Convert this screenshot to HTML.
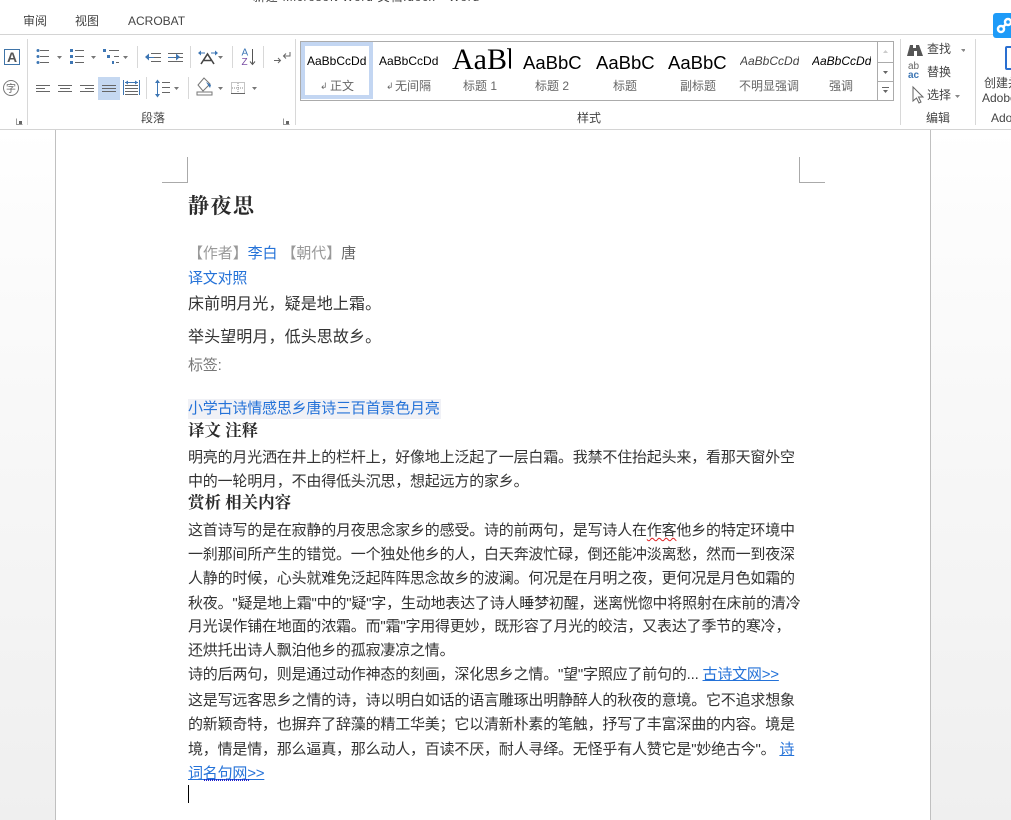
<!DOCTYPE html>
<html lang="zh"><head><meta charset="utf-8"><title>静夜思</title>
<style>
html,body{margin:0;padding:0}
body{width:1011px;height:820px;overflow:hidden;position:relative;background:#fff;font-family:"Liberation Sans","WenQuanYi Zen Hei","Noto Sans CJK SC",sans-serif}
.a{position:absolute;white-space:nowrap}
.sep{position:absolute;width:1px;background:#d8d8d8}
.t{position:absolute;white-space:nowrap;font-size:12px;line-height:14px;color:#444}
.l{position:absolute;left:188px;white-space:nowrap;font-size:15px;line-height:20px;height:20px;color:#333;letter-spacing:-.2px}
.b{color:#2472d8}
.g{color:#999}
.h{font-weight:bold;font-family:"Noto Serif CJK SC",serif;color:#2a2a2a}
.pv{position:absolute;white-space:nowrap;color:#000;overflow:hidden}
.lb{position:absolute;white-space:nowrap;font-size:12px;line-height:14px;color:#666;top:79px}
u.r{text-decoration:underline wavy #e02020 1px;text-underline-offset:2px}
</style></head><body>
<div class="a" style="left:0;top:130px;width:1011px;height:690px;background:linear-gradient(#fff 0,#fdfdfd 60px,#f8f8f8 280px,#efefef 690px)"></div>
<div class="a" style="left:55px;top:130px;width:874px;height:690px;background:#fff;border-left:1px solid #c0c0c0;border-right:1px solid #c0c0c0;box-sizing:content-box"></div>
<div class="a" style="left:0;top:129px;width:1011px;height:1px;background:#d4d4d4"></div>
<div class="a" style="left:0;top:34px;width:1011px;height:1px;background:#d4d4d4"></div>

<div class="t" style="left:253px;top:-10px;color:#444;letter-spacing:.75px">新建 Microsoft Word 文档.docx - Word</div>
<div class="t" style="left:23px;top:14px">审阅</div>
<div class="t" style="left:75px;top:14px">视图</div>
<div class="t" style="left:128px;top:14px">ACROBAT</div>

<div class="sep" style="left:27px;top:39px;height:86px"></div>
<div class="sep" style="left:295px;top:39px;height:86px"></div>
<div class="sep" style="left:900px;top:39px;height:86px"></div>
<div class="sep" style="left:975px;top:39px;height:86px"></div>
<div class="a" style="left:98px;top:77px;width:22px;height:23px;background:#c5d8f1"></div>

<svg class="a" style="left:0;top:0" width="300" height="130" fill="none" stroke-width="1">
<g stroke="#d8d8d8"><path d="M137.500 46v22M190.500 46v22M232.500 46v22M263.500 46v22M146.500 77v22M188.500 77v22"/></g>
<rect x="4.500" y="49.500" width="15" height="15" stroke="#3f74a8"/>
<text x="12" y="62" font-size="14" font-weight="bold" fill="#555" text-anchor="middle" font-family="Liberation Sans">A</text>
<circle cx="11" cy="88" r="7.500" stroke="#777"/>
<text x="11" y="92" font-size="10" fill="#666" text-anchor="middle" font-family="WenQuanYi Zen Hei">字</text>
<g stroke="#666"><path d="M40 50.500h9M40 56.500h9M40 62.500h9M75 50.500h9M75 56.500h9M75 62.500h9M109 50.500h10M114 56.500h5M116 62.500h3"/>
<path d="M151 53.500h10M153 57.500h8M151 61.500h10M168 53.500h15M174 57.500h9M168 61.500h15"/>
<path d="M36 85.500h14M36 88.500h9M36 91.500h14M58 85.500h14M60 88.500h10M58 91.500h14M80 85.500h14M85 88.500h9M80 91.500h14M102 85.500h14M102 88.500h14M102 91.500h14"/>
<path d="M125 85.500h13M125 88.500h13M125 91.500h13M125 94.500h13"/>
<path d="M162 82.500h8M162 87.500h8M162 92.500h8"/></g>
<g fill="#3d76b4"><circle cx="38" cy="50.500" r="1.500"/><circle cx="38" cy="56.500" r="1.500"/><circle cx="38" cy="62.500" r="1.500"/>
<rect x="70" y="49" width="3" height="3"/><rect x="70" y="55" width="3" height="3"/><rect x="70" y="61" width="3" height="3"/>
<rect x="103" y="49" width="3" height="3"/><rect x="107" y="55" width="3" height="3"/><rect x="112" y="61" width="2" height="3"/>
<path d="M145 57l4-3.500v7z"/><path d="M172 57l-4-3.500v7z" transform="translate(8 0)"/></g>
<path d="M147 57.500h7M168 57.500h6" stroke="#3d76b4"/>
<path d="M123.500 80v15M139.500 80v15M125 82.500h13" stroke="#3d76b4"/>
<path d="M125 82.500l3-2v4zM138 82.500l-3-2v4z" fill="#3d76b4"/>
<path d="M157.500 81v15" stroke="#3d76b4"/><path d="M155 83l2.500-3.500 2.500 3.500zM155 94l2.500 3.500 2.500-3.500z" fill="#3d76b4"/>
<path d="M201 64l6.500-10 6.500 10M204 60.500h7" stroke="#444" stroke-width="1.600"/>
<path d="M200 53h5M211 53h5" stroke="#3d76b4"/><path d="M198 53l3-2.500v5zM218 53l-3-2.500v5z" fill="#3d76b4"/>
<text x="241.500" y="55.500" font-size="10" fill="#3d76b4" font-family="Liberation Sans">A</text>
<text x="241.500" y="65" font-size="10" fill="#7a4ea3" font-family="Liberation Sans">Z</text>
<path d="M252.500 49v15M250 61.500l2.500 3 2.500-3" stroke="#555"/>
<path d="M290 52v4h-6M286 53.500l-2.500 2.500 2.500 2.500M274 60.500h6M278 58l2.500 2.500-2.500 2.500" stroke="#666"/>
<path d="M204 78l-6 7 5 6 7-7zM197 92h15v3h-15z" stroke="#777"/><path d="M206 82l5 3-1 3z" fill="#3d76b4"/>
<path d="M231.500 82.500h13v11h-13zM238 83v10M232 88h12" stroke="#888" stroke-dasharray="1 1"/><path d="M231 93.500h14" stroke="#666"/>
<g fill="#777"><path d="M57 56h5l-2.500 3zM91 56h5l-2.500 3zM123 56h5l-2.500 3zM218 56h5l-2.500 3zM174 87h5l-2.500 3zM218 87h5l-2.500 3zM252 87h5l-2.500 3z"/></g>
<g stroke="#999"><path d="M16.500 118.500v6h6M283.500 118.500v6h6"/></g><path d="M19 121h3v3h-3zM286 121h3v3h-3z" fill="#666"/>
</svg>

<div class="t" style="left:141px;top:111px">段落</div>
<div class="t" style="left:577px;top:111px">样式</div>
<div class="t" style="left:926px;top:111px">编辑</div>
<div class="t" style="left:991px;top:111px">Ado</div>

<div class="a" style="left:300px;top:41px;width:592px;height:58px;border:1px solid #ababab;background:#fff"></div>
<div class="a" style="left:301px;top:42px;height:49px;border:4px solid #c3d6f2;width:64px"></div>
<div class="a" style="left:877px;top:42px;width:1px;height:58px;background:#ababab"></div>
<div class="a" style="left:878px;top:62px;width:15px;height:1px;background:#ababab"></div>
<div class="a" style="left:878px;top:81px;width:15px;height:1px;background:#ababab"></div>
<svg class="a" style="left:878px;top:42px" width="15" height="58"><path d="M5 11h5l-2.500-3z" fill="#ccc"/><path d="M5 29h5l-2.500 3z" fill="#666"/><path d="M5 48h5l-2.500 3z" fill="#666"/><path d="M4 45.500h7" stroke="#666"/></svg>

<div class="pv" style="left:307px;top:54px;font-size:12px;line-height:14px">AaBbCcDd</div>
<div class="pv" style="left:379px;top:54px;font-size:12px;line-height:14px">AaBbCcDd</div>
<div class="pv" style="left:452px;top:43px;width:59px;font-family:'Liberation Serif',serif;font-size:30px;line-height:34px">AaBbC</div>
<div class="pv" style="left:523px;top:52px;font-size:18.500px;line-height:22px">AaBbC</div>
<div class="pv" style="left:596px;top:52px;font-size:18.500px;line-height:22px">AaBbC</div>
<div class="pv" style="left:668px;top:52px;font-size:18.500px;line-height:22px">AaBbC</div>
<div class="pv" style="left:740px;top:54px;font-size:12px;line-height:14px;font-style:italic;color:#444">AaBbCcDd</div>
<div class="pv" style="left:812px;top:54px;font-size:12px;line-height:14px;font-style:italic">AaBbCcDd</div>
<div class="lb" style="left:320px;font-size:9px">↲</div><div class="lb" style="left:330px">正文</div>
<div class="lb" style="left:386px;font-size:9px">↲</div><div class="lb" style="left:395px">无间隔</div>
<div class="lb" style="left:463px">标题 1</div>
<div class="lb" style="left:535px">标题 2</div>
<div class="lb" style="left:613px">标题</div>
<div class="lb" style="left:680px">副标题</div>
<div class="lb" style="left:739px">不明显强调</div>
<div class="lb" style="left:829px">强调</div>

<svg class="a" style="left:905px;top:42px" width="60" height="62" fill="none">
<path d="M5 3h3v3h3V3h3l4 11h-6V9h-3v5H2z" fill="#555"/>
<text x="3" y="27" font-size="10" fill="#666" font-family="Liberation Sans">ab</text>
<text x="3" y="36" font-size="10" fill="#3d76b4" font-family="Liberation Sans" font-weight="bold">ac</text>
<path d="M8 45v14l3.500-3 2.500 5 2-1-2.500-5h4.500z" stroke="#666" fill="#fff"/>
<path d="M56 7h5l-2.500 3zM50 53h5l-2.500 3z" fill="#888"/>
</svg>
<div class="t" style="left:927px;top:42px">查找</div>
<div class="t" style="left:927px;top:65px">替换</div>
<div class="t" style="left:927px;top:88px">选择</div>
<div class="t" style="left:984px;top:76px">创建并</div>
<div class="t" style="left:982px;top:91px">Adobe</div>
<div class="a" style="left:1005px;top:46px;width:14px;height:20px;border:2px solid #2a6fd0;border-radius:2px"></div>
<div class="a" style="left:993px;top:13px;width:30px;height:25px;background:#1e9bf8;border-radius:3px"></div>
<svg class="a" style="left:993px;top:13px" width="18" height="25" fill="none" stroke="#fff" stroke-width="2.500"><circle cx="8" cy="16" r="3"/><circle cx="15" cy="9" r="3"/><path d="M10 14l3-3"/></svg>

<svg class="a" style="left:0;top:0" width="1011" height="820" fill="none"><path d="M187.500 157v25.500H162M799.500 157v25.500H825" stroke="#aaa"/></svg>

<div class="l h" style="top:193px;font-size:21px;line-height:24px;height:24px;letter-spacing:1.500px">静夜思</div>
<div class="l" style="top:244px;letter-spacing:-.1px"><span class="g">【作者】</span><span class="b">李白</span> <span class="g">【朝代】</span><span style="color:#666">唐</span></div>
<div class="l b" style="top:269px">译文对照</div>
<div class="l" style="top:295px;font-size:16px;letter-spacing:.1px">床前明月光，疑是地上霜。</div>
<div class="l" style="top:328px;font-size:16px;letter-spacing:.1px">举头望明月，低头思故乡。</div>
<div class="l" style="top:356px;color:#777">标签:</div>
<div class="l b" style="top:399px;background:#f0f1f6;padding-right:1px">小学古诗情感思乡唐诗三百首景色月亮</div>
<div class="l h" style="top:419px;font-size:16.500px;letter-spacing:0">译文 注释</div>
<div class="l" style="top:448px">明亮的月光洒在井上的栏杆上，好像地上泛起了一层白霜。我禁不住抬起头来，看那天窗外空</div>
<div class="l" style="top:472px">中的一轮明月，不由得低头沉思，想起远方的家乡。</div>
<div class="l h" style="top:491px;font-size:16.500px;letter-spacing:0">赏析 相关内容</div>
<div class="l" style="top:521px">这首诗写的是在寂静的月夜思念家乡的感受。诗的前两句，是写诗人在<u class="r" style="text-decoration-line:underline">作客</u>他乡的特定环境中</div>
<div class="l" style="top:545px">一刹那间所产生的错觉。一个独处他乡的人，白天奔波忙碌，倒还能冲淡离愁，然而一到夜深</div>
<div class="l" style="top:569px">人静的时候，心头就难免泛起阵阵思念故乡的波澜。何况是在月明之夜，更何况是月色如霜的</div>
<div class="l" style="top:594px">秋夜。"疑是地上霜"中的"疑"字，生动地表达了诗人睡梦初醒，迷离恍惚中将照射在床前的清冷</div>
<div class="l" style="top:617px">月光误作铺在地面的浓霜。而"霜"字用得更妙，既形容了月光的皎洁，又表达了季节的寒冷，</div>
<div class="l" style="top:641px">还烘托出诗人飘泊他乡的孤寂凄凉之情。</div>
<div class="l" style="top:665px">诗的后两句，则是通过动作神态的刻画，深化思乡之情。"望"字照应了前句的... <span class="b" style="text-decoration:underline">古诗文网&gt;&gt;</span></div>
<div class="l" style="top:691px">这是写远客思乡之情的诗，诗以明白如话的语言雕琢出明静醉人的秋夜的意境。它不追求想象</div>
<div class="l" style="top:715px">的新颖奇特，也摒弃了辞藻的精工华美；它以清新朴素的笔触，抒写了丰富深曲的内容。境是</div>
<div class="l" style="top:740px">境，情是情，那么逼真，那么动人，百读不厌，耐人寻绎。无怪乎有人赞它是"妙绝古今"。 <span class="b" style="text-decoration:underline">诗</span></div>
<div class="l b" style="top:764px;text-decoration:underline">词名句网&gt;&gt;</div>
<div class="a" style="left:204px;top:779px;width:46px;height:2px;background:repeating-linear-gradient(90deg,#2222cc 0 1px,transparent 1px 2px)"></div>
<div class="a" style="left:188px;top:785px;width:1px;height:18px;background:#000"></div>
</body></html>
